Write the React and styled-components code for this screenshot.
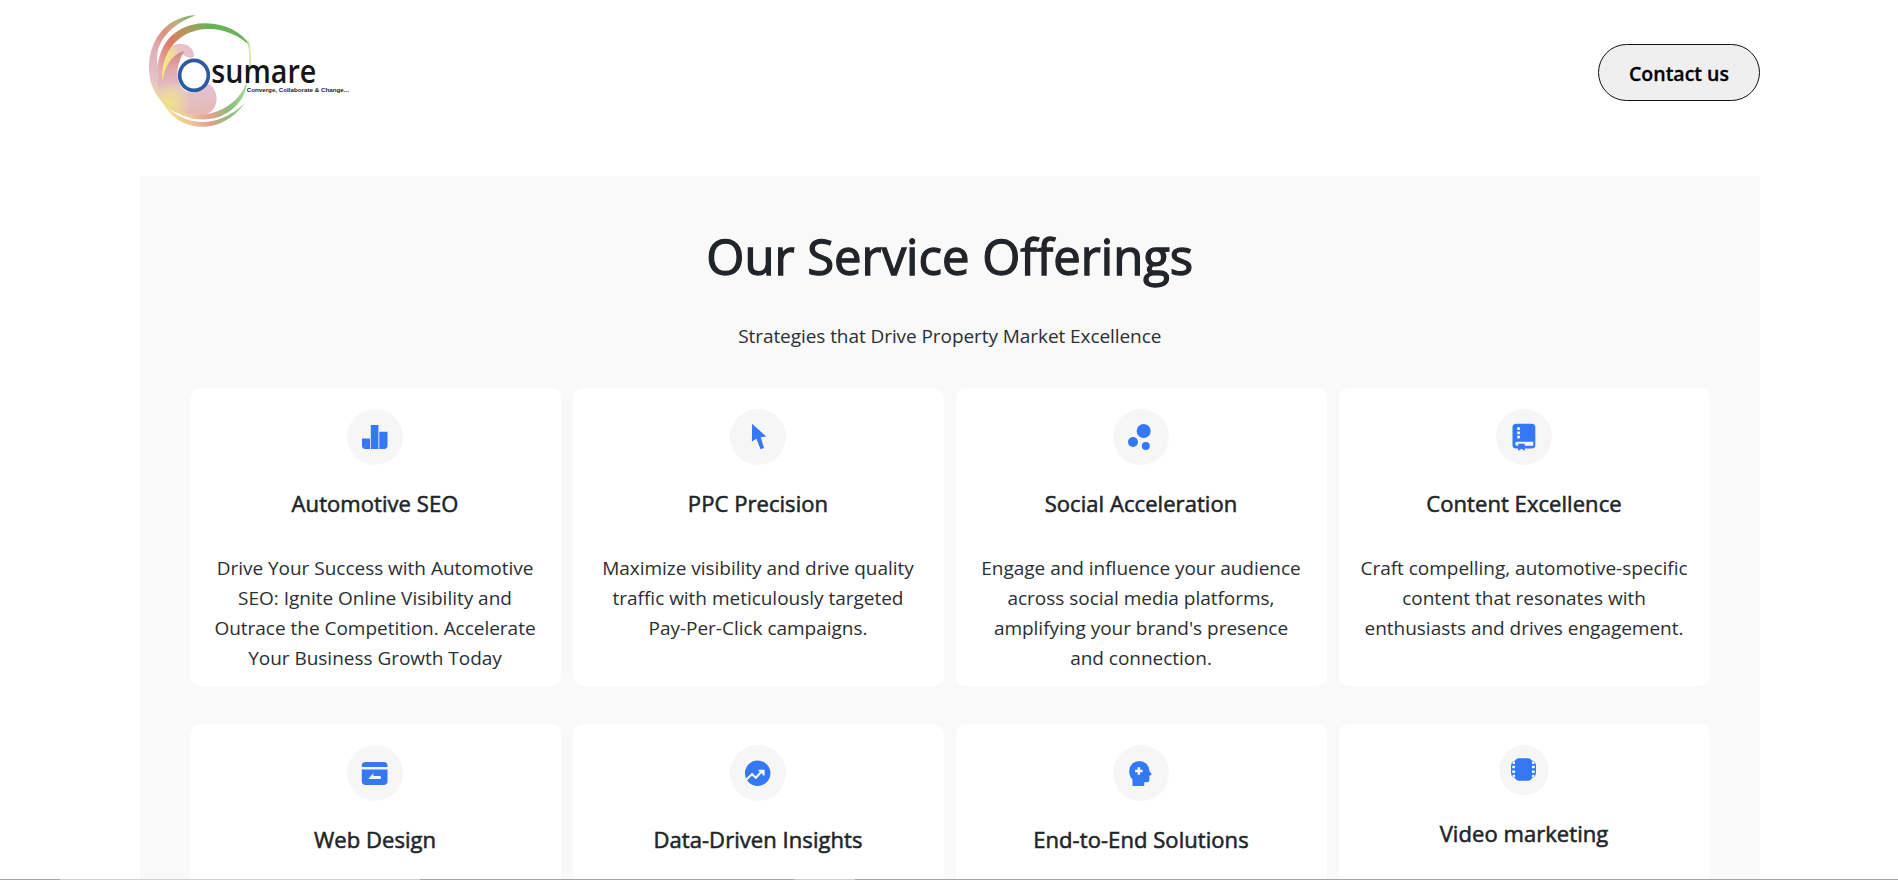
import React from "react";
import styled, { createGlobalStyle } from "styled-components";

const GlobalStyle = createGlobalStyle`
  * { box-sizing: border-box; }
  html, body { margin: 0; background: #fff; overflow: hidden; }
  body { font-family: "Open Sans", "Noto Sans", sans-serif; color: #212529; }
`;

const Page = styled.div`
  height: 880px;
  display: flex;
  flex-direction: column;
  overflow: hidden;
`;

const Header = styled.header`
  width: 1620px;
  height: 176px;
  flex: none;
  margin: 0 auto;
  display: flex;
  align-items: flex-start;
  justify-content: space-between;
  position: relative;
  left: 1px;
`;

const LogoSvg = styled.svg`
  display: block;
  width: 240px;
  height: 140px;
  margin-left: -10px;
`;

const ContactButton = styled.button`
  margin-top: 44px;
  width: 162px;
  height: 57px;
  padding: 3px 0 0;
  border: 1px solid #111;
  border-radius: 29px;
  background: #efefef;
  color: #000;
  font: 600 19.5px/1 "Open Sans", sans-serif;
  letter-spacing: 0;
  -webkit-text-stroke: 0.3px #000;
`;

const Panel = styled.section`
  width: 1620px;
  flex: 1;
  min-height: 0;
  margin: 0 auto;
  position: relative;
  left: 1px;
  padding: 0 50px 0 49.5px;
  background: #f9f9f9;
  text-align: center;
  overflow: hidden;
`;

const Heading = styled.h1`
  margin: 0;
  padding-top: 49px;
  font-size: 49px;
  line-height: 62px;
  font-weight: 500;
  letter-spacing: 0;
  -webkit-text-stroke: 1.3px #212529;
`;

const Subtitle = styled.p`
  margin: 34px 0 37px;
  font-size: 19px;
  line-height: 30px;
  letter-spacing: -0.07px;
  color: #2b2f33;
`;

const Grid = styled.div`
  display: grid;
  grid-template-columns: repeat(4, 371px);
  grid-auto-rows: 298px;
  gap: 38px 12px;
`;

const Card = styled.article`
  display: flex;
  flex-direction: column;
  align-items: center;
  padding-top: 21px;
  border-radius: 10px;
  background: #fff;
`;

const IconCircle = styled.svg`
  flex: none;
  width: ${(p) => p.$size}px;
  height: ${(p) => p.$size}px;
  border-radius: 50%;
  background: #f6f6f6;
  fill: #3478f6;
`;

const CardTitle = styled.h2`
  margin: 22px 0 34px;
  font-size: 22px;
  line-height: 32px;
  font-weight: 500;
  letter-spacing: 0.06px;
  -webkit-text-stroke: 0.55px #212529;
  white-space: nowrap;
`;

const Description = styled.p`
  margin: 0;
  font-size: 19px;
  line-height: 30px;
  letter-spacing: -0.02px;
  color: #2b2f33;
  white-space: pre-line;
`;

const BottomEdge = styled.footer`
  flex: none;
  height: 1px;
  display: grid;
  grid-template-columns: 60px 360px 374px 61px 1fr;
`;

const EdgeSegment = styled.span`
  background: ${(p) => (p.$light ? "#cfcfcd" : "#a5a5a1")};
`;

const BarsIcon = () => (
  <>
    <path d="M15 29.5h8V40h-4.5a3.5 3.5 0 0 1-3.5-3.5z" />
    <path d="M23.8 16h7.6v24h-7.6z" />
    <path d="M32.3 22.8h8.2v13.7A3.5 3.5 0 0 1 37 40h-4.7z" />
  </>
);
const CursorIcon = () => (
  <path d="M22.1 14.8 36.3 27.5l-5.6.8L34 38.9l-3.4 1.3-4.2-10.4-4.5 2.8z" />
);
const BubblesIcon = () => (
  <>
    <circle cx="30.7" cy="22" r="7" />
    <circle cx="20" cy="33" r="5" />
    <circle cx="32.8" cy="37" r="4" />
  </>
);
const BookIcon = () => (
  <>
    <rect x="16.5" y="14.8" width="22.8" height="24.8" rx="3.6" />
    <g fill="#f6f6f6">
      <rect x="21.2" y="18.3" width="2.7" height="2.7" />
      <rect x="21.2" y="22.5" width="2.7" height="2.7" />
      <rect x="21.2" y="26.7" width="2.7" height="2.7" />
      <path d="M21.2 32.7h16v4h-16a2 2 0 0 1 0-4z" />
    </g>
    <path d="M22.2 34.8h6.5V42l-3.2-2.2-3.3 2.2z" />
  </>
);
const BrowserIcon = () => (
  <>
    <path d="M18.5 17h18.3a3.7 3.7 0 0 1 3.7 3.7V22H14.8v-1.3a3.7 3.7 0 0 1 3.7-3.7z" />
    <path d="M14.8 24.6h25.7V36a4 4 0 0 1-4 4H18.8a4 4 0 0 1-4-4z" />
    <path fill="#f6f6f6" d="M21.2 34l5.2-5.7V31h7.4v3z" />
  </>
);
const TrendIcon = () => (
  <>
    <circle cx="27.7" cy="28.3" r="12.7" />
    <path d="M15.8 35l6.2-5.8 3.8 3.6 6.6-7" fill="none" stroke="#f6f6f6" strokeWidth="2.2" />
    <path fill="#f6f6f6" d="M28.6 24.7h6v5.800h-2v-1.500l-2.800-2.500h-1.200z" />
  </>
);
const HeadIcon = () => (
  <>
    <path d="M19.5 41v-6.5C17.3 32.3 16.2 29.5 16.2 26a10.1 10.1 0 0 1 20.2 0l2.5 3.6-2.5 1.2V35a2.3 2.3 0 0 1-2.3 2.3h-2.9V41z" />
    <path fill="#f6f6f6" d="M24.6 22.3h2.5v2.5h2.5v2.5h-2.5v2.5h-2.5v-2.5h-2.5v-2.5h2.5z" />
  </>
);
const FilmIcon = () => (
  <>
    <rect x="12" y="15" width="25" height="18.8" rx="6" />
    <g fill="#f6f6f6">
      <rect x="13.6" y="16.4" width="2.6" height="2.6" />
      <rect x="13.2" y="20.8" width="3" height="2.4" />
      <rect x="13.2" y="25.5" width="3" height="2.4" />
      <rect x="13.6" y="29.8" width="2.6" height="2.6" />
      <rect x="32.8" y="16.4" width="2.6" height="2.6" />
      <rect x="32.8" y="20.8" width="3" height="2.4" />
      <rect x="32.8" y="25.5" width="3" height="2.4" />
      <rect x="32.8" y="29.8" width="2.6" height="2.6" />
    </g>
    <rect x="16.2" y="13.2" width="16.6" height="22.6" rx="4" />
  </>
);

const services = [
  { title: "Automotive SEO", icon: BarsIcon, text: "Drive Your Success with Automotive\nSEO: Ignite Online Visibility and\nOutrace the Competition. Accelerate\nYour Business Growth Today" },
  { title: "PPC Precision", icon: CursorIcon, text: "Maximize visibility and drive quality\ntraffic with meticulously targeted\nPay-Per-Click campaigns." },
  { title: "Social Acceleration", icon: BubblesIcon, text: "Engage and influence your audience\nacross social media platforms,\namplifying your brand's presence\nand connection." },
  { title: "Content Excellence", icon: BookIcon, text: "Craft compelling, automotive-specific\ncontent that resonates with\nenthusiasts and drives engagement." },
  { title: "Web Design", icon: BrowserIcon },
  { title: "Data-Driven Insights", icon: TrendIcon },
  { title: "End-to-End Solutions", icon: HeadIcon },
  { title: "Video marketing", icon: FilmIcon, size: 50 },
];

const Logo = () => (
  <LogoSvg viewBox="0 0 720 420">
    <defs>
      <linearGradient id="outer" gradientUnits="userSpaceOnUse" x1="190" y1="46" x2="90" y2="310">
        <stop offset="0" stopColor="#6fb865" />
        <stop offset="0.14" stopColor="#b9b184" />
        <stop offset="0.28" stopColor="#de8f7e" />
        <stop offset="0.5" stopColor="#e0b0bb" />
        <stop offset="0.8" stopColor="#e6c3c6" />
        <stop offset="1" stopColor="#f1e08c" />
      </linearGradient>
      <linearGradient id="ring" gradientUnits="userSpaceOnUse" x1="85" y1="210" x2="240" y2="75">
        <stop offset="0" stopColor="#e5b3b4" />
        <stop offset="0.4" stopColor="#dd7a66" />
        <stop offset="0.7" stopColor="#b09a5c" />
        <stop offset="1" stopColor="#6ab258" />
      </linearGradient>
      <linearGradient id="body" gradientUnits="userSpaceOnUse" x1="155" y1="155" x2="185" y2="345">
        <stop offset="0" stopColor="#d8877a" />
        <stop offset="0.25" stopColor="#dfa9ae" />
        <stop offset="0.6" stopColor="#e2c2d1" />
        <stop offset="1" stopColor="#e5b9b4" />
      </linearGradient>
      <radialGradient id="glow" gradientUnits="userSpaceOnUse" cx="118" cy="308" r="68">
        <stop offset="0" stopColor="#f1e08a" />
        <stop offset="0.5" stopColor="#efdb98" stopOpacity="0.7" />
        <stop offset="1" stopColor="#f0d49c" stopOpacity="0" />
      </radialGradient>
      <linearGradient id="tail" gradientUnits="userSpaceOnUse" x1="95" y1="0" x2="350" y2="0">
        <stop offset="0" stopColor="#f3e77f" />
        <stop offset="0.35" stopColor="#efc39c" />
        <stop offset="0.58" stopColor="#dfa08e" />
        <stop offset="0.8" stopColor="#8cbf78" />
        <stop offset="1" stopColor="#a5d69f" />
      </linearGradient>
      <linearGradient id="curl" gradientUnits="userSpaceOnUse" x1="98" y1="190" x2="190" y2="150">
        <stop offset="0" stopColor="#f5ea7c" />
        <stop offset="0.35" stopColor="#f1dc98" />
        <stop offset="0.65" stopColor="#e8c3ca" />
        <stop offset="1" stopColor="#e3c0d2" />
      </linearGradient>
      <linearGradient id="side" gradientUnits="userSpaceOnUse" x1="0" y1="112" x2="0" y2="242">
        <stop offset="0" stopColor="#b4d58f" />
        <stop offset="0.3" stopColor="#dfeaa8" />
        <stop offset="1" stopColor="#b5d890" />
      </linearGradient>
    </defs>
    <path fill="url(#outer)" d="M197 46C118 48 57 112 57 203c0 46 18 86 50 112l28 10-36-85c-13-20-20-50-17-78 6-45 46-91 115-116z" />
    <path fill="url(#curl)" d="M96 242c-12-52 4-94 36-107 28-10 55 3 60 28 2 9-6 12-16 10l-22-10-50 78z" />
    <path fill="url(#ring)" d="M90 250c-12-34-9-75 11-112 26-46 74-69 127-68 58 1 106 25 133 67-35-32-83-53-132-50-56 3-101 34-121 82-10 25-14 53-10 81z" />
    <path fill="url(#body)" d="M162 153c-36 10-58 44-64 90l-14-12c-6 34 2 64 26 88 26 22 64 33 104 29 40-6 53-43 42-72-5-14-12-22-22-24-16 16-34 29-55 25-26-6-38-31-37-59 1-24 10-43 20-65z" />
    <path fill="url(#glow)" d="M98 243l-18-20c-6 36 2 70 26 96 26 22 64 33 104 29 30-6 46-30 42-72z" />
    <path fill="url(#tail)" d="M106 305c51 45 118 50 173 21 37-19 61-48 73-86-3 52-36 92-84 110-56 19-122 6-162-45z" />
    <path fill="url(#tail)" d="M100 310c62 70 159 80 245-2-38 53-87 74-137 72-47-2-88-30-108-70z" />
    <path d="M354 124C363 160 363 202 352 242" fill="none" stroke="url(#side)" strokeWidth="5" />
    <ellipse cx="192" cy="226" rx="43" ry="45" fill="#fff" stroke="#2b5ca3" strokeWidth="11" />
    <text x="244" y="250" fontFamily="Open Sans, sans-serif" fontWeight="600" fontSize="97" textLength="315" lengthAdjust="spacingAndGlyphs" fill="#161616">sumare</text>
    <text x="350" y="277" fontFamily="Liberation Sans, sans-serif" fontWeight="700" fontSize="17.5" textLength="307" lengthAdjust="spacingAndGlyphs" fill="#222">Converge, Collaborate &amp; Change...</text>
  </LogoSvg>
);

export default function App() {
  return (
    <Page>
      <GlobalStyle />
      <Header>
        <Logo />
        <ContactButton>Contact us</ContactButton>
      </Header>
      <Panel>
        <Heading>Our Service Offerings</Heading>
        <Subtitle>Strategies that Drive Property Market Excellence</Subtitle>
        <Grid>
          {services.map(({ title, icon: Icon, text, size = 56 }) => (
            <Card key={title}>
              <IconCircle $size={size} viewBox={`0 0 ${size} ${size}`}>
                <Icon />
              </IconCircle>
              <CardTitle>{title}</CardTitle>
              {text && <Description>{text}</Description>}
            </Card>
          ))}
        </Grid>
      </Panel>
      <BottomEdge>
        <EdgeSegment />
        <EdgeSegment $light />
        <EdgeSegment />
        <EdgeSegment $light />
        <EdgeSegment />
      </BottomEdge>
    </Page>
  );
}
